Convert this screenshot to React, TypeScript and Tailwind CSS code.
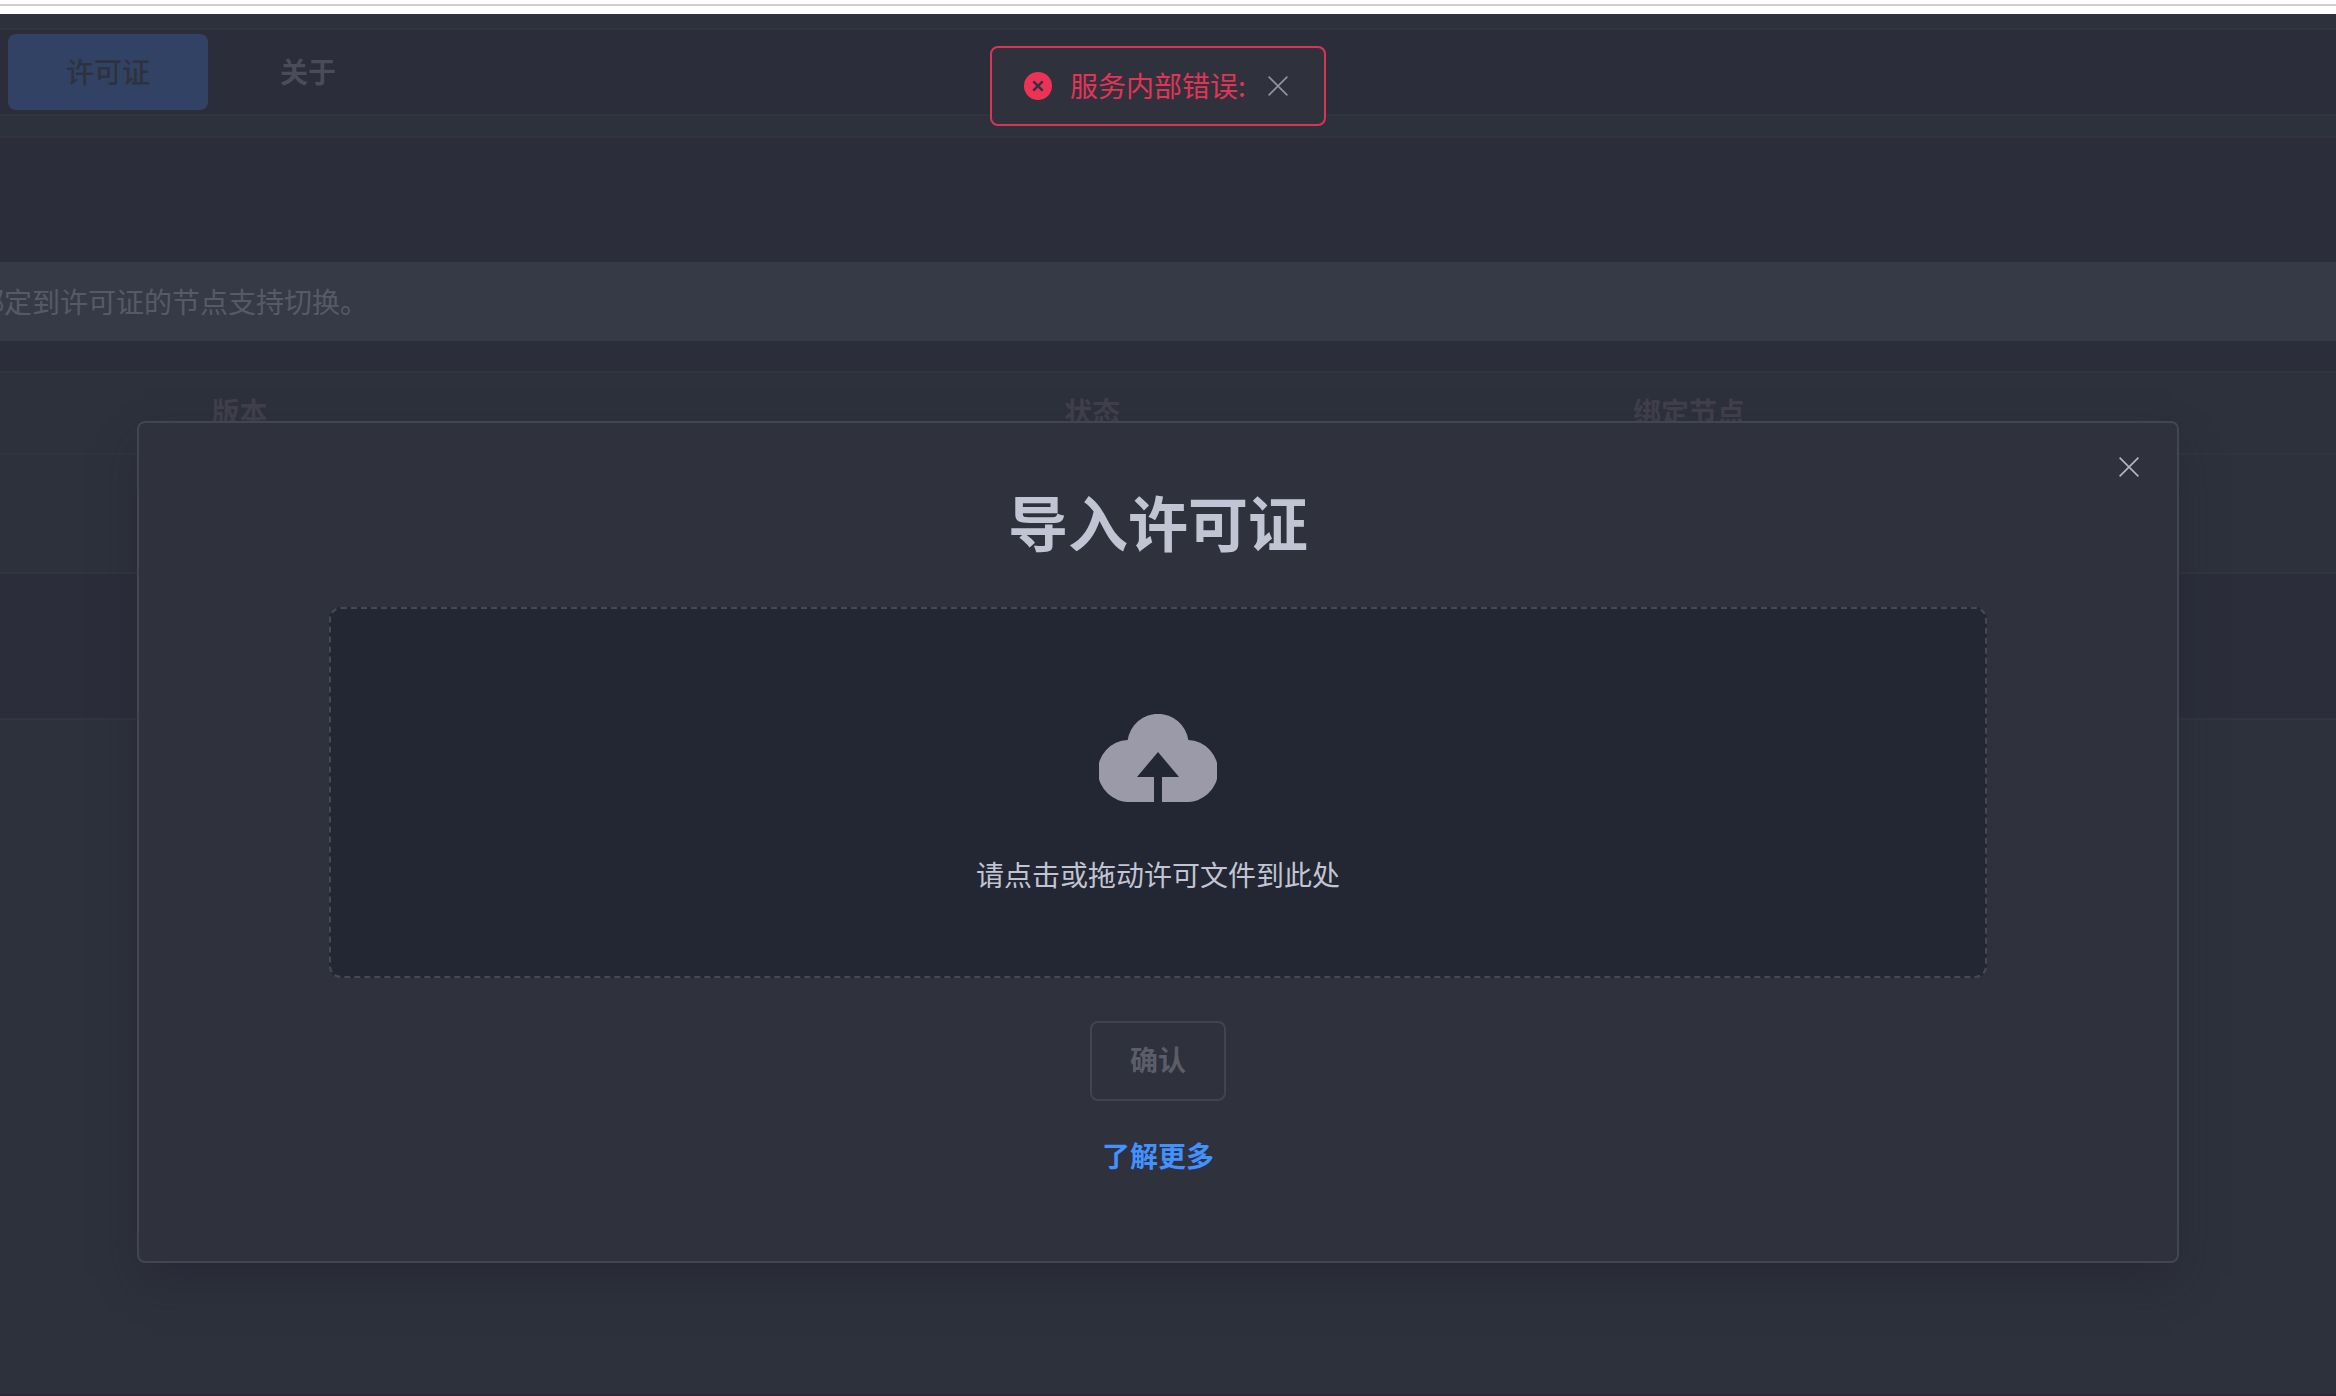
import { useState } from "react";

const columns = [
  { label: "", width: "w-[8.2%]" },
  { label: "版本", width: "w-[36.5%]" },
  { label: "状态", width: "w-[24.35%]" },
  { label: "绑定节点", width: "" },
];

function CloseIcon() {
  return (
    <svg viewBox="0 0 20 20" className="size-5" fill="none" stroke="currentColor" strokeWidth="1.6" aria-hidden="true">
      <path d="M0.6 0.6 19.4 19.4M19.4 0.6 0.6 19.4" />
    </svg>
  );
}

function ErrorIcon() {
  return (
    <svg viewBox="0 0 28 28" className="size-7 shrink-0" aria-hidden="true">
      <circle cx="14" cy="14" r="14" fill="#ed3355" />
      <path d="M9.3 9.3 18.7 18.7M18.7 9.3 9.3 18.7" stroke="#30323e" strokeWidth="2.4" />
    </svg>
  );
}

function CloudUploadIcon() {
  return (
    <svg viewBox="0 0 352 264" className="h-[88px] w-[118px] fill-[#9a9aa9]" aria-hidden="true">
      <path d="M93 264A93 93 0 0 1 85 78A92 92 0 0 1 267 78A93 93 0 0 1 259 264H188V189H239L176 114L113 189H164V264Z" />
    </svg>
  );
}

function LicensePage() {
  return (
    <div className="flex min-h-screen flex-col bg-[#2d313c]">
      <div className="h-3.5 border-t-4 border-white bg-white">
        <div className="h-0.5 bg-[#cecece]" />
      </div>
      <div className="h-3.5" />
      <nav className="flex h-[88px] items-center border-y-2 border-[#31343f] bg-[#2b2e3a] pl-2 text-[28px] leading-10">
        <button className="h-[76px] w-[200px] rounded-lg bg-[#314264] pb-0.5 font-medium text-[#2e323f]">许可证</button>
        <button className="h-[76px] w-[200px] pb-0.5 font-bold text-[#4a4d59]">关于</button>
      </nav>
      <div className="h-5" />
      <main>
        <div className="border-t-2 border-[#31343f] bg-[#2b2e3a] pt-[124px] pb-[30px]">
          <p className="h-[79px] overflow-hidden bg-[#363a46] text-[28px] leading-[78px] whitespace-nowrap text-[#575a66]">
            <span className="-ml-6">绑定到许可证的节点支持切换。</span>
          </p>
        </div>
        <table className="w-full table-fixed border-collapse text-left text-[28px] leading-10">
          <thead>
            <tr className="h-[82px] border-y-2 border-[#31343f]">
              {columns.map((c) => (
                <th key={c.label} className={`${c.width} px-5 pb-1 font-bold text-[#413f4b]`}>
                  {c.label}
                </th>
              ))}
            </tr>
          </thead>
          <tbody>
            <tr className="h-[119px] border-b-2 border-[#32343f]">
              <td colSpan={4} />
            </tr>
            <tr className="h-[146px] border-b-2 border-[#32343f] bg-[#2b2e3a]">
              <td colSpan={4} />
            </tr>
          </tbody>
        </table>
      </main>
      <div className="mt-auto h-0.5 bg-[#292938]" />
    </div>
  );
}

function Toast({ onClose }: { onClose: () => void }) {
  return (
    <div className="absolute inset-x-0 top-[46px] flex justify-center pr-5">
      <div
        role="alert"
        className="flex h-20 items-center rounded-lg border-2 border-[#d73754] bg-[#2f313d] pr-9 pl-8 text-[28px] leading-10 text-[#e33456]"
      >
        <ErrorIcon />
        <span className="ml-[18px] pb-0.5">服务内部错误:</span>
        <button aria-label="关闭提示" onClick={onClose} className="ml-[22px] text-[#92939f]">
          <CloseIcon />
        </button>
      </div>
    </div>
  );
}

function ImportDialog({ onClose }: { onClose: () => void }) {
  return (
    <div className="absolute inset-x-0 top-[421px] pr-[157px] pl-[137px]">
      <section
        role="dialog"
        aria-labelledby="import-title"
        className="relative flex flex-col items-center rounded-lg border-2 border-[#434551] bg-[#2f313d] px-[190px] pt-[54px] pb-[86px] shadow-[0_20px_40px_-8px_rgba(34,33,48,0.55)]"
      >
        <button aria-label="关闭" onClick={onClose} className="absolute top-[34px] right-[38px] text-[#b4b6c4]">
          <CloseIcon />
        </button>
        <h1 id="import-title" className="text-[60px] leading-[88px] font-bold text-[#c1c4d2]">
          导入许可证
        </h1>
        <label className="mt-[42px] flex h-[371px] w-full cursor-pointer flex-col items-center rounded-xl border-2 border-dashed border-[#464955] bg-[#232733] pt-[105px] text-[28px] leading-10 text-[#c1c4d2]">
          <CloudUploadIcon />
          <span className="mt-[52px]">请点击或拖动许可文件到此处</span>
          <input type="file" className="sr-only" />
        </label>
        <button
          disabled
          className="mt-[43px] h-20 w-[136px] rounded-lg border-2 border-[#42444f] pb-1 text-[28px] leading-10 font-bold text-[#5b5d68]"
        >
          确认
        </button>
        <a href="#more" className="mt-[34px] text-[28px] leading-10 font-bold text-[#4390ff]">
          了解更多
        </a>
      </section>
    </div>
  );
}

export default function App() {
  const [toast, setToast] = useState(true);
  const [dialog, setDialog] = useState(true);
  return (
    <div lang="zh-CN" className="relative overflow-hidden font-['Noto_Sans_CJK_SC',sans-serif]">
      <LicensePage />
      {dialog && <ImportDialog onClose={() => setDialog(false)} />}
      {toast && <Toast onClose={() => setToast(false)} />}
    </div>
  );
}
